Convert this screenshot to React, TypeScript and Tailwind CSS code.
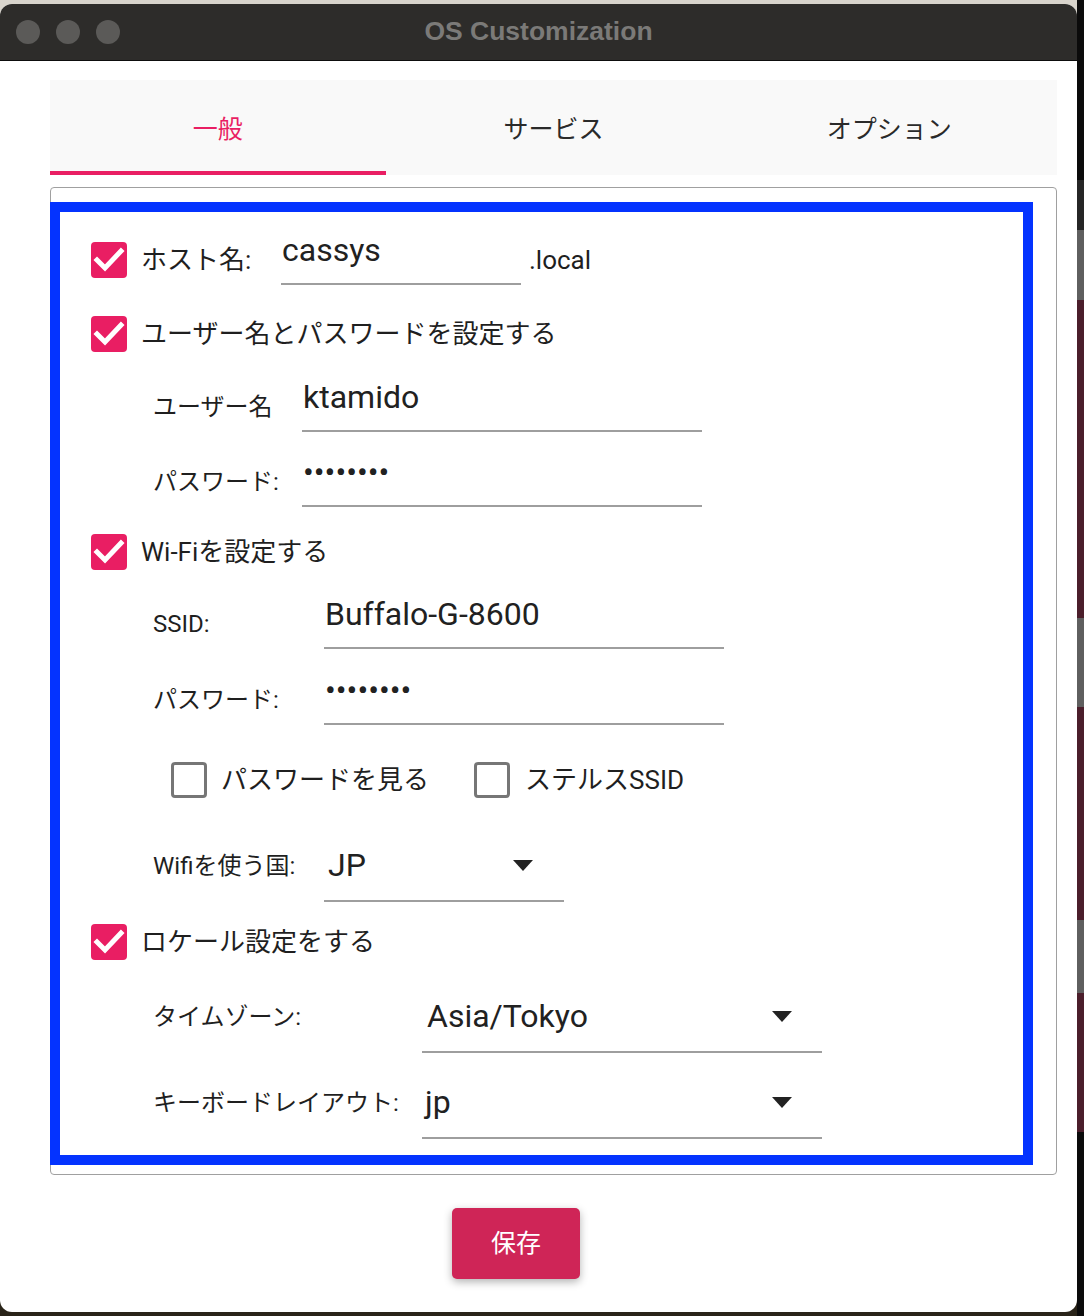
import React from 'react';

const FONT = "font-['Roboto','Noto_Sans_CJK_JP',sans-serif]";

function CheckedBox() {
  return (
    <div className="flex h-[36px] w-[36px] shrink-0 items-center justify-center rounded-[4px] bg-[#e91e63]">
      <svg width="36" height="36" viewBox="0 0 36 36">
        <polyline points="6,18 14,26 30,9" fill="none" stroke="#ffffff" strokeWidth="5" strokeLinecap="square" />
      </svg>
    </div>
  );
}

function EmptyBox() {
  return <div className="h-[36px] w-[36px] shrink-0 rounded-[4px] border-[3px] border-[#767676] bg-white" />;
}

function CheckRow({ label, className = '' }: { label: string; className?: string }) {
  return (
    <div className={`flex h-[36px] items-center ${className}`}>
      <div className="ml-[31px]">
        <CheckedBox />
      </div>
      <span className="ml-[14px] text-[26px] text-[#1f1f1f]">{label}</span>
    </div>
  );
}

function FieldRow({
  label,
  labelWidth,
  width,
  value,
  className = '',
}: {
  label: string;
  labelWidth: string;
  width: string;
  value: string;
  className?: string;
}) {
  return (
    <div className={`flex h-[50px] items-center ${className}`}>
      <span className={`ml-[93px] ${labelWidth} shrink-0 text-[24px] text-[#1f1f1f]`}>{label}</span>
      <div className={`flex h-full ${width} items-end border-b-2 border-[#9e9e9e] pb-[14px] pl-[1px] text-[32px] leading-[37px] text-[#212121]`}>
        {value}
      </div>
    </div>
  );
}

function SelectRow({
  label,
  labelWidth,
  width,
  value,
  padding,
  className = '',
}: {
  label: string;
  labelWidth: string;
  width: string;
  value: string;
  padding: string;
  className?: string;
}) {
  return (
    <div className={`flex h-[50px] items-center ${className}`}>
      <span className={`ml-[93px] mb-[22px] ${labelWidth} shrink-0 text-[24px] text-[#1f1f1f]`}>{label}</span>
      <div className={`flex h-full ${width} items-center justify-between border-b-2 border-[#9e9e9e] pb-[22px] ${padding} text-[32px] leading-[37px] text-[#212121]`}>
        <span>{value}</span>
        <svg width="20" height="11" viewBox="0 0 20 11">
          <polygon points="0,0 20,0 10,11" fill="#222222" />
        </svg>
      </div>
    </div>
  );
}

export default function App() {
  return (
    <div className={`flex h-[1316px] w-[1084px] overflow-hidden ${FONT}`}>
      <div className="flex w-[1077px] flex-col bg-[linear-gradient(to_bottom,#d8d4cc_0px,#d8d4cc_20px,#2a2419_20px)]">
        <div className="mt-[4px] flex h-[1308px] flex-col overflow-hidden rounded-[12px] bg-white">
          {/* title bar */}
          <div className="relative flex h-[57px] shrink-0 items-center justify-center border-b border-[#0d0d0d] bg-[#2d2c2a]">
            <div className="absolute left-[16px] top-[16px] flex gap-[16px]">
              <div className="h-[24px] w-[24px] rounded-full bg-[#5b5a58]" />
              <div className="h-[24px] w-[24px] rounded-full bg-[#5b5a58]" />
              <div className="h-[24px] w-[24px] rounded-full bg-[#5b5a58]" />
            </div>
            <span className="font-['Liberation_Sans',sans-serif] text-[26.5px] font-bold text-[#7b7a78]">OS Customization</span>
          </div>

          <div className="flex flex-col pl-[50px] pr-[20px] pt-[19px]">
            {/* tabs */}
            <div className="grid h-[95px] grid-cols-3 bg-[#f9f9f9] text-[25px]">
              <div className="flex items-center justify-center border-b-4 border-[#e91e63] pt-[8px] text-[#e91e63]">一般</div>
              <div className="flex items-center justify-center border-b-4 border-transparent pt-[8px] text-[#2a2a2a]">サービス</div>
              <div className="flex items-center justify-center border-b-4 border-transparent pt-[8px] text-[#2a2a2a]">オプション</div>
            </div>

            {/* frame */}
            <div className="mt-[12px] h-[988px] rounded-[4px] border border-[#a0a0a0] pt-[14px]">
              <div className="-ml-px flex h-[963px] w-[983px] flex-col border-[10px] border-[#0433ff]">
                <div className="mt-[23px] flex h-[50px] items-center">
                  <div className="ml-[31px]">
                    <CheckedBox />
                  </div>
                  <span className="ml-[14px] w-[140px] shrink-0 text-[26px] text-[#1f1f1f]">ホスト名:</span>
                  <div className="flex h-full w-[240px] items-end border-b-2 border-[#9e9e9e] pb-[14px] pl-[1px] text-[32px] leading-[37px] text-[#212121]">
                    cassys
                  </div>
                  <span className="ml-[8px] text-[26px] text-[#1f1f1f]">.local</span>
                </div>

                <CheckRow className="mt-[31px]" label="ユーザー名とパスワードを設定する" />
                <FieldRow className="mt-[30px]" label="ユーザー名" labelWidth="w-[149px]" width="w-[400px]" value="ktamido" />
                <FieldRow className="mt-[25px]" label="パスワード:" labelWidth="w-[149px]" width="w-[400px]" value="••••••••" />

                <CheckRow className="mt-[27px]" label="Wi-Fiを設定する" />
                <FieldRow className="mt-[29px]" label="SSID:" labelWidth="w-[171px]" width="w-[400px]" value="Buffalo-G-8600" />
                <FieldRow className="mt-[26px]" label="パスワード:" labelWidth="w-[171px]" width="w-[400px]" value="••••••••" />

                <div className="mt-[37px] flex h-[36px] items-center text-[26px] text-[#1f1f1f]">
                  <div className="ml-[111px]">
                    <EmptyBox />
                  </div>
                  <span className="ml-[14px]">パスワードを見る</span>
                  <div className="ml-[45px]">
                    <EmptyBox />
                  </div>
                  <span className="ml-[15px]">ステルスSSID</span>
                </div>

                <SelectRow className="mt-[54px]" label="Wifiを使う国:" labelWidth="w-[171px]" width="w-[240px]" value="JP" padding="pl-[4px] pr-[31px]" />

                <CheckRow className="mt-[22px]" label="ロケール設定をする" />
                <SelectRow className="mt-[43px]" label="タイムゾーン:" labelWidth="w-[269px]" width="w-[400px]" value="Asia/Tokyo" padding="pl-[5px] pr-[30px]" />
                <SelectRow className="mt-[36px]" label="キーボードレイアウト:" labelWidth="w-[269px]" width="w-[400px]" value="jp" padding="pl-[3px] pr-[30px]" />
              </div>
            </div>

            <div className="mt-[33px] flex">
              <button
                type="button"
                className="ml-[402px] flex h-[71px] w-[128px] items-center justify-center rounded-[5px] bg-[#cf2557] text-[25px] text-white shadow-[0_3px_8px_rgba(0,0,0,0.3)]"
              >
                保存
              </button>
            </div>
          </div>
        </div>
      </div>
      <div className="w-[7px] bg-[linear-gradient(to_bottom,#0b0b0b_0px,#0b0b0b_180px,#262626_180px,#262626_230px,#5f5f5f_230px,#5f5f5f_300px,#4b1e2b_300px,#4b1e2b_618px,#5f5f5f_618px,#5f5f5f_707px,#4b1e2b_707px,#4b1e2b_920px,#5f5f5f_920px,#5f5f5f_993px,#4b1e2b_993px,#4b1e2b_1132px,#0b0b0b_1132px)]" />
    </div>
  );
}
